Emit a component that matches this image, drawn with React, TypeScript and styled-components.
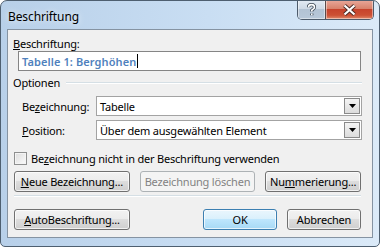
import React from 'react';
import styled, { createGlobalStyle } from 'styled-components';

const Global = createGlobalStyle`
  html, body { margin: 0; padding: 0; background: #ffffff; }
  body {
    font-family: "Segoe UI", "Noto Sans", sans-serif;
    font-size: 11px;
    letter-spacing: -0.2px;
    color: #000;
  }
`;

const Window = styled.div`
  width: 380px;
  height: 247px;
  box-sizing: border-box;
  border: 1px solid #4e5f70;
  border-radius: 7px 7px 5px 5px;
  background: linear-gradient(to right, #b8d0e9 0%, #c9def3 55%, #dbeaf8 100%);
  display: flex;
  flex-direction: column;
  overflow: hidden;
`;

const TitleBar = styled.div`
  height: 28px;
  display: flex;
  align-items: flex-start;
  justify-content: space-between;
  padding-left: 7px;
`;

const Title = styled.span`
  margin-top: 7px;
  font-size: 12px;
  letter-spacing: -0.1px;
  color: #000;
  text-shadow: 0 0 6px rgba(255, 255, 255, 0.9);
`;

const Caption = styled.div`
  display: flex;
  margin-right: 5px;
  margin-top: -1px;
  border: 1px solid #4d5b6b;
  border-top: 0;
  border-radius: 0 0 5px 5px;
  overflow: hidden;
  height: 19px;
`;

const CapBtn = styled.div<{ $close?: boolean }>`
  width: ${p => (p.$close ? '47px' : '27px')};
  display: flex;
  align-items: center;
  justify-content: center;
  background: ${p =>
    p.$close
      ? 'linear-gradient(#e9a99b 0%, #d8826c 45%, #c7432c 50%, #cc5034 80%, #e08a6c 100%)'
      : 'linear-gradient(#e3ebf4 0%, #cfdae6 45%, #b3c3d4 50%, #b8c8d9 100%)'};
  border-left: ${p => (p.$close ? '1px solid #5a4a4a' : '0')};
  box-shadow: inset 0 0 0 1px rgba(255, 255, 255, 0.45);
`;

const Client = styled.div`
  margin: 0 6px;
  height: 209px;
  box-sizing: border-box;
  border: 1px solid #8593a2;
  background: #f0f0f0;
  padding: 6px 5px 0 5px;
  display: flex;
  flex-direction: column;
`;

const Label = styled.div<{ $w?: number }>`
  height: 15px;
  line-height: 15px;
  width: ${p => (p.$w ? `${p.$w}px` : 'auto')};
  flex: none;
  white-space: nowrap;
`;

const TextBox = styled.div`
  margin: 0 6px 0 5px;
  height: 20px;
  box-sizing: border-box;
  border: 1px solid #858585;
  background: #fff;
  display: flex;
  align-items: center;
  padding-left: 3px;
  color: #4f81bd;
  font-weight: 600;
  font-size: 11px;
  letter-spacing: 0.1px;
`;

const Caret = styled.span`
  display: inline-block;
  width: 1px;
  height: 14px;
  background: #000;
  margin-left: 1px;
`;

const Group = styled.div`
  margin-top: 4px;
  display: flex;
  align-items: center;
  gap: 6px;
  padding-right: 5px;
`;

const GroupLine = styled.div`
  flex: 1;
  height: 1px;
  background: #d5dfe5;
  border-bottom: 1px solid #fff;
`;

const FieldRow = styled.div<{ $top: number }>`
  margin-top: ${p => p.$top}px;
  display: flex;
  align-items: center;
  padding-left: 9px;
  padding-right: 5px;
`;

const Select = styled.div`
  flex: 1;
  height: 20px;
  box-sizing: border-box;
  border: 1px solid #a3a3a3;
  background: #fff;
  display: flex;
  align-items: center;
  padding-left: 3px;
`;

const SelectText = styled.span`
  flex: 1;
`;

const DropBtn = styled.div`
  width: 16px;
  height: 16px;
  margin-right: 1px;
  box-sizing: border-box;
  border: 1px solid #8a8a8a;
  background: linear-gradient(#f4f4f4, #dcdcdc);
  display: flex;
  align-items: center;
  justify-content: center;
`;

const CheckRow = styled.label`
  margin-top: 11px;
  display: flex;
  align-items: center;
  gap: 4px;
  padding-left: 1px;
  height: 15px;
`;

const Box = styled.span`
  width: 13px;
  height: 13px;
  box-sizing: border-box;
  border: 1px solid #8e8f8f;
  background: linear-gradient(135deg, #dcdcdc, #fbfbfb);
  box-shadow: inset 0 0 0 1px #f4f4f4;
`;

const ButtonRow = styled.div<{ $top: number }>`
  margin-top: ${p => p.$top}px;
  display: flex;
  gap: 10px;
  padding-left: 1px;
  padding-right: 6px;
`;

const Btn = styled.div<{ $w: number; $kind?: 'default' | 'disabled' }>`
  width: ${p => p.$w}px;
  height: 21px;
  box-sizing: border-box;
  border: 1px solid ${p => (p.$kind === 'default' ? '#3c7fb1' : p.$kind === 'disabled' ? '#adb2b5' : '#707070')};
  border-radius: 3px;
  display: flex;
  align-items: center;
  justify-content: center;
  white-space: nowrap;
  color: ${p => (p.$kind === 'disabled' ? '#838383' : '#000')};
  background: ${p =>
    p.$kind === 'default'
      ? 'linear-gradient(#eaf6fd 0%, #d9f0fc 50%, #bee6fd 50%, #a7d9f5 100%)'
      : p.$kind === 'disabled'
        ? '#f4f4f4'
        : 'linear-gradient(#f2f2f2 0%, #ebebeb 50%, #dddddd 50%, #cfcfcf 100%)'};
  box-shadow: ${p => (p.$kind === 'disabled' ? 'none' : 'inset 0 0 0 1px rgba(255,255,255,0.7)')};
`;

const Spacer = styled.div`
  flex: 1;
`;

const Separator = styled.div`
  margin: 3px 6px 0 1px;
  height: 1px;
  background: #d5dfe5;
  border-bottom: 1px solid #fff;
`;

const U = styled.span`
  text-decoration: underline;
`;

const Arrow = () => (
  <svg width="7" height="4" viewBox="0 0 7 4">
    <path d="M0 0h7L3.5 4z" fill="#000" />
  </svg>
);

export default function App() {
  return (
    <>
      <Global />
      <Window>
        <TitleBar>
          <Title>Beschriftung</Title>
          <Caption>
            <CapBtn>
              <svg width="11" height="14" viewBox="0 0 11 14">
                <path
                  d="M2.5 4.2C2.5 2.5 3.8 1.6 5.5 1.6S8.5 2.6 8.5 4.2 6.5 6.3 5.8 7.2V8.6M5.8 10.6v1.6"
                  fill="none"
                  stroke="#3a4653"
                  strokeWidth="3.2"
                />
                <path
                  d="M2.5 4.2C2.5 2.5 3.8 1.6 5.5 1.6S8.5 2.6 8.5 4.2 6.5 6.3 5.8 7.2V8.6M5.8 10.6v1.6"
                  fill="none"
                  stroke="#fff"
                  strokeWidth="1.6"
                />
              </svg>
            </CapBtn>
            <CapBtn $close>
              <svg width="15" height="12" viewBox="0 0 15 12">
                <path d="M2.5 1.5l10 9M12.5 1.5l-10 9" stroke="#4a2b26" strokeWidth="4" />
                <path d="M2.5 1.5l10 9M12.5 1.5l-10 9" stroke="#fff" strokeWidth="2.2" />
              </svg>
            </CapBtn>
          </Caption>
        </TitleBar>
        <Client>
          <Label>
            <U>B</U>eschriftung:
          </Label>
          <TextBox>
            Tabelle 1: Berghöhen
            <Caret />
          </TextBox>
          <Group>
            <Label>Optionen</Label>
            <GroupLine />
          </Group>
          <FieldRow $top={6}>
            <Label $w={74}>
              Be<U>z</U>eichnung:
            </Label>
            <Select>
              <SelectText>Tabelle</SelectText>
              <DropBtn>
                <Arrow />
              </DropBtn>
            </Select>
          </FieldRow>
          <FieldRow $top={4}>
            <Label $w={74}>
              <U>P</U>osition:
            </Label>
            <Select>
              <SelectText>Über dem ausgewählten Element</SelectText>
              <DropBtn>
                <Arrow />
              </DropBtn>
            </Select>
          </FieldRow>
          <CheckRow>
            <Box />
            <span>
              Be<U>z</U>eichnung nicht in der Beschriftung verwenden
            </span>
          </CheckRow>
          <ButtonRow $top={5}>
            <Btn $w={116}>
              <span>
                <U>N</U>eue Bezeichnung...
              </span>
            </Btn>
            <Btn $w={116} $kind="disabled">
              Bezeichnung löschen
            </Btn>
            <Btn $w={96}>
              <span>
                Nu<U>m</U>merierung...
              </span>
            </Btn>
          </ButtonRow>
          <Separator />
          <ButtonRow $top={12}>
            <Btn $w={116}>
              <span>
                <U>A</U>utoBeschriftung...
              </span>
            </Btn>
            <Spacer />
            <Btn $w={74} $kind="default">
              OK
            </Btn>
            <Btn $w={74}>Abbrechen</Btn>
          </ButtonRow>
        </Client>
      </Window>
    </>
  );
}
